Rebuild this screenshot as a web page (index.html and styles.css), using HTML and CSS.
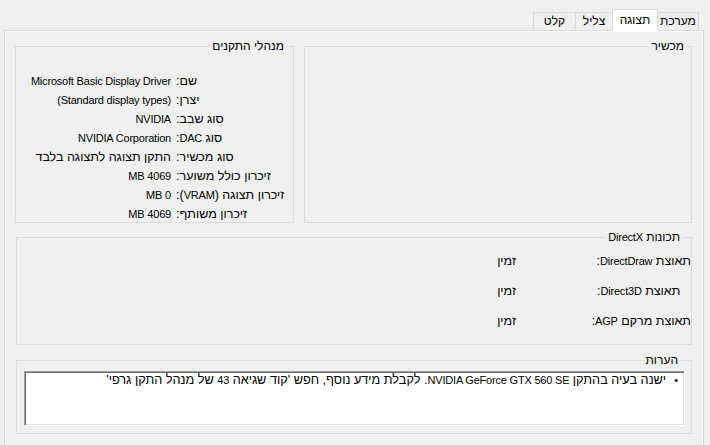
FILE: index.html
```
<!DOCTYPE html>
<html lang="he" dir="rtl">
<head>
<meta charset="utf-8">
<title>DirectX - תצוגה</title>
<link rel="stylesheet" href="styles.css">
</head>
<body>
<div class="window">
  <div class="tabs">
    <div class="tab tab-system">מערכת</div>
    <div class="tab tab-display active">תצוגה</div>
    <div class="tab tab-sound">צליל</div>
    <div class="tab tab-input">קלט</div>
  </div>
  <div class="panel">
    <div class="top-row">
      <fieldset class="group device">
        <legend>מכשיר</legend>
      </fieldset>
      <fieldset class="group drivers">
        <legend>מנהלי התקנים</legend>
        <div class="info-grid">
          <div class="label">שם:</div><div class="value en">Microsoft Basic Display Driver</div>
          <div class="label">יצרן:</div><div class="value en">(Standard display types)</div>
          <div class="label">סוג שבב:</div><div class="value en">NVIDIA</div>
          <div class="label">סוג <span class="en">DAC</span>:</div><div class="value en">NVIDIA Corporation</div>
          <div class="label">סוג מכשיר:</div><div class="value">התקן תצוגה לתצוגה בלבד</div>
          <div class="label">זיכרון כולל משוער:</div><div class="value en">4069 MB</div>
          <div class="label">זיכרון תצוגה (<span class="en">VRAM</span>):</div><div class="value en">0 MB</div>
          <div class="label">זיכרון משותף:</div><div class="value en">4069 MB</div>
        </div>
      </fieldset>
    </div>
    <fieldset class="group dx">
      <legend>תכונות <span class="en">DirectX</span></legend>
      <div class="dx-grid">
        <div class="label">תאוצת <span class="en">DirectDraw</span>:</div><div class="value">זמין</div>
        <div class="label">תאוצת <span class="en">Direct3D</span>:</div><div class="value">זמין</div>
        <div class="label">תאוצת מרקם <span class="en">AGP</span>:</div><div class="value">זמין</div>
      </div>
    </fieldset>
    <fieldset class="group notes">
      <legend>הערות</legend>
      <div class="notes-box">
        <div class="note"><span class="bullet">•</span><span class="note-text">ישנה בעיה בהתקן <span class="en">NVIDIA GeForce GTX 560 SE</span>. לקבלת מידע נוסף, חפש 'קוד שגיאה <span class="en">43</span> של מנהל התקן גרפי'</span></div>
      </div>
    </fieldset>
  </div>
</div>
</body>
</html>
```
FILE: styles.css
```
html, body {
  margin: 0;
  padding: 0;
  background: #f0f0f0;
}

body {
  width: 710px;
  height: 445px;
  overflow: hidden;
  font-family: "Liberation Sans", Arial, sans-serif;
  font-size: 12.5px;
  color: #000;
}

.en {
  font-size: 11px;
  letter-spacing: -0.2px;
}

.tabs {
  display: flex;
  align-items: flex-end;
  height: 30px;
  padding-right: 11px;
  position: relative;
  z-index: 1;
  font-size: 12px;
}

.tab {
  box-sizing: border-box;
  height: 18px;
  border: 1px solid #d9d9d9;
  border-bottom: none;
  margin-left: -1px;
  background: #f0f0f0;
  text-align: center;
  line-height: 17px;
}

.tab-system { width: 42px; }
.tab-display { width: 46px; }
.tab-sound { width: 38px; }
.tab-input { width: 43px; }

.tab.active {
  height: 22px;
  margin-bottom: -1px;
  background: #fff;
  line-height: 20px;
  position: relative;
  z-index: 2;
}

.panel {
  box-sizing: border-box;
  height: 430px;
  margin: 0 6px 0 4px;
  padding: 8px 11px 0 10px;
  border: 1px solid #d9d9d9;
  box-shadow: inset 0 0 0 1px #fff;
}

.top-row {
  display: flex;
  gap: 10px;
  height: 184px;
}

.group {
  box-sizing: border-box;
  margin: 0;
  padding: 0;
  min-width: 0;
  border: 1px solid #dcdcdc;
}

.group legend {
  padding: 0 2px;
  margin-right: 5px;
  font-size: 12px;
  line-height: 14px;
}

.device {
  width: 388px;
  height: 184px;
}

.drivers {
  width: 279px;
  height: 184px;
  padding: 19px 2px 0 0;
}

.info-grid {
  display: grid;
  grid-template-columns: 115px 155px;
  column-gap: 5px;
  grid-auto-rows: 19px;
  line-height: 19px;
}

.label {
  text-align: left;
  white-space: nowrap;
}

.value {
  text-align: right;
  white-space: nowrap;
}

.dx {
  width: 676px;
  height: 115px;
  margin-top: 7px;
  padding: 9px 0 0 0;
}

.group.dx legend {
  margin-right: 9px;
}

.dx-grid {
  display: grid;
  grid-template-columns: 94px auto;
  column-gap: 81px;
  row-gap: 14px;
  line-height: 16px;
  justify-content: start;
}

.notes {
  width: 676px;
  height: 81px;
  margin-top: 8px;
  padding: 4px 6px 0 7px;
}

.notes-box {
  box-sizing: border-box;
  height: 55px;
  background: #fff;
  border-top: 1px solid #a0a0a0;
  border-right: 1px solid #fff;
  border-bottom: 1px solid #fff;
  border-left: 1px solid #a0a0a0;
  box-shadow: inset 1px 1px 0 #696969, inset -1px -1px 0 #e3e3e3;
  padding: 1px 6px 0 0;
}

.note {
  display: flex;
  gap: 8px;
  line-height: 14px;
  white-space: nowrap;
  font-size: 12.7px;
}

.bullet {
  font-size: 11px;
}
```
